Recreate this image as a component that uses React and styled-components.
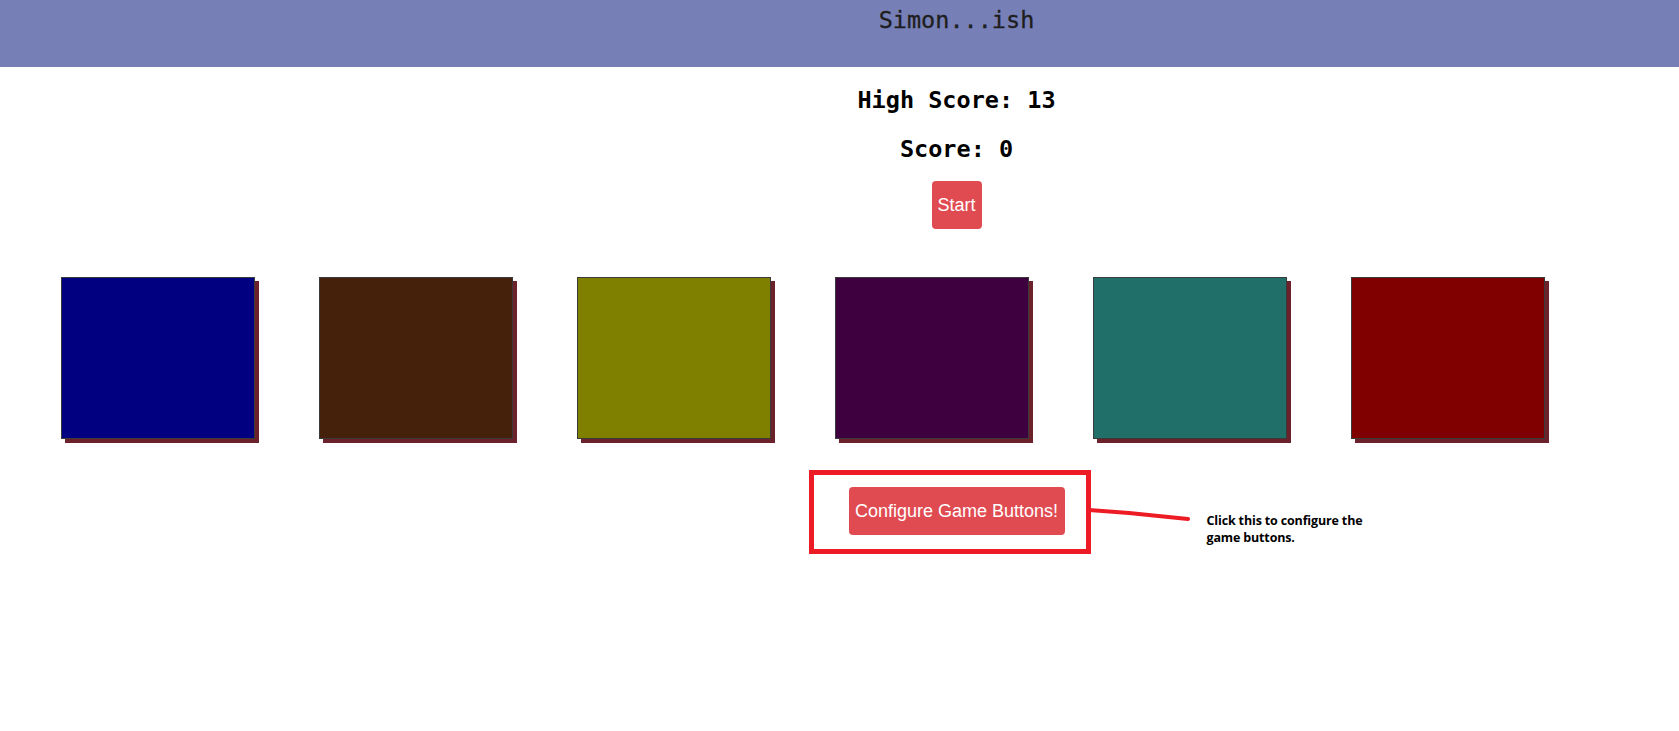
import React from "react";
import styled, { createGlobalStyle } from "styled-components";

const Global = createGlobalStyle`
  html, body { margin: 0; padding: 0; background: #fff; }
  body { overflow: hidden; }
`;

const Page = styled.div`
  width: 1679px;
  min-height: 731px;
`;

const Header = styled.header`
  height: 67px;
  box-sizing: border-box;
  padding: 6px 0 0 234px;
  background: #767fb6;
`;

const Title = styled.h1`
  margin: 0;
  text-align: center;
  font-family: "DejaVu Sans Mono", monospace;
  font-weight: normal;
  font-size: 23.5px;
  line-height: 28px;
  color: #1e1e1e;
  -webkit-text-stroke: 0.3px #1e1e1e;
`;

const Center = styled.section`
  padding-left: 234px;
  display: flex;
  flex-direction: column;
  align-items: center;
`;

const ScoreLine = styled.h2`
  margin: ${(p) => p.$top}px 0 0;
  font-family: "DejaVu Sans Mono", monospace;
  font-weight: bold;
  font-size: 23.5px;
  line-height: 28px;
  color: #000;
`;

const RedButton = styled.button`
  box-sizing: border-box;
  height: 48px;
  padding: 0 6px;
  border: none;
  border-radius: 4px;
  background: #e04b52;
  color: #fff;
  font-family: "Liberation Sans", Arial, sans-serif;
  font-size: 18px;
  line-height: 48px;
  cursor: pointer;
`;

const StartButton = styled(RedButton)`
  margin-top: 18px;
  width: 50px;
`;

const Squares = styled.div`
  display: flex;
  gap: 64px;
  padding-left: 61px;
  margin-top: 48px;
`;

const Square = styled.div`
  width: 194px;
  height: 162px;
  box-sizing: border-box;
  border: 1px solid #3a3a3a;
  background: ${(p) => p.$color};
  box-shadow: 4px 4px 0 #6c222b;
`;

const ConfigRow = styled.div`
  padding-left: 234px;
  margin-top: 48px;
  display: flex;
  justify-content: center;
`;

const Anchor = styled.div`
  position: relative;
`;

const ConfigButton = styled(RedButton)`
  width: 216px;
  padding: 0;
`;

const Highlight = styled.div`
  position: absolute;
  left: -40px;
  top: -17px;
  width: 282px;
  height: 84px;
  box-sizing: border-box;
  border: 5px solid #ed1c24;
  pointer-events: none;
`;

const Pointer = styled.svg`
  position: absolute;
  left: 240px;
  top: 18px;
  overflow: visible;
`;

const Note = styled.p`
  position: absolute;
  left: 358px;
  top: 25px;
  margin: 0;
  width: 180px;
  font-family: "Open Sans", sans-serif;
  font-weight: 700;
  font-size: 12.5px;
  line-height: 17px;
  letter-spacing: -0.15px;
  color: #000;
  text-align: left;
`;

const colors = ["#000080", "#45210b", "#808000", "#3f003f", "#207069", "#800000"];

export default function App() {
  return (
    <Page>
      <Global />
      <Header>
        <Title>Simon...ish</Title>
      </Header>
      <Center>
        <ScoreLine $top={19}>High Score: 13</ScoreLine>
        <ScoreLine $top={21}>Score: 0</ScoreLine>
        <StartButton>Start</StartButton>
      </Center>
      <Squares>
        {colors.map((c) => (
          <Square key={c} $color={c} />
        ))}
      </Squares>
      <ConfigRow>
        <Anchor>
          <ConfigButton>Configure Game Buttons!</ConfigButton>
          <Highlight />
          <Pointer width="110" height="20">
            <polyline
              points="0,5 40,8 99,14"
              fill="none"
              stroke="#ed1c24"
              strokeWidth="4"
              strokeLinecap="round"
            />
          </Pointer>
          <Note>
            Click this to configure the
            <br />
            game buttons.
          </Note>
        </Anchor>
      </ConfigRow>
    </Page>
  );
}
